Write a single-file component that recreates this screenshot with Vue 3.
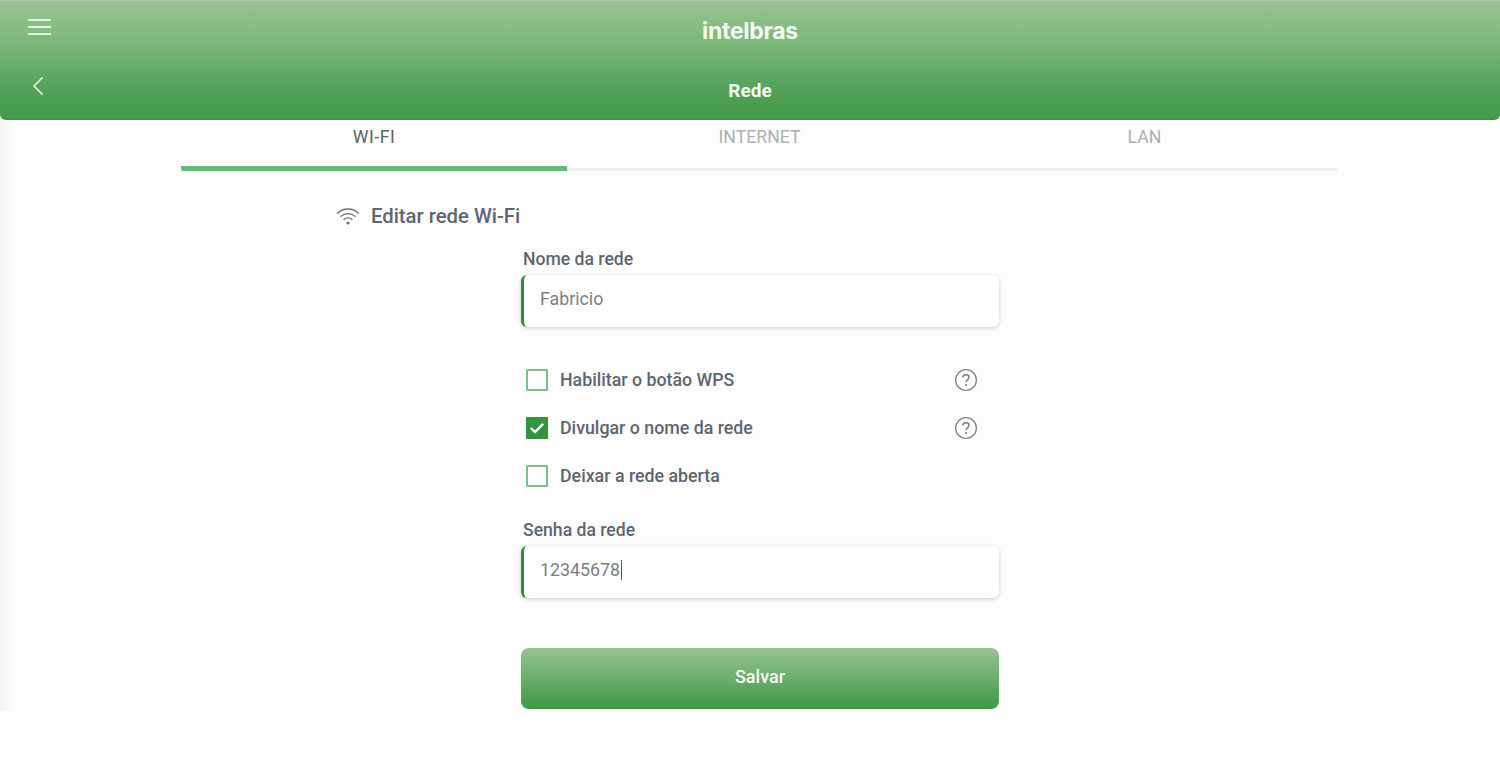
<script setup>
const checks = [
  { label: 'Habilitar o botão WPS', checked: false, help: true },
  { label: 'Divulgar o nome da rede', checked: true, help: true },
  { label: 'Deixar a rede aberta', checked: false, help: false }
]
const tabs = ['WI-FI', 'INTERNET', 'LAN']
</script>

<template>
  <div class="page">
    <div class="side-shade"></div>
    <header class="top">
      <div class="bar1">
        <button class="menu" aria-label="Menu"><span></span><span></span><span></span></button>
        <div class="logo">intelbras</div>
      </div>
      <div class="bar2">
        <svg class="back" width="12" height="20" viewBox="0 0 12 20" fill="none">
          <path d="M10.5 1.5 2 10l8.5 8.5" stroke="#eef6ec" stroke-width="1.6" />
        </svg>
        <div class="title">Rede</div>
      </div>
    </header>

    <nav class="tabs">
      <div v-for="(t, i) in tabs" :key="t" class="tab" :class="{ active: i === 0 }">{{ t }}</div>
    </nav>

    <section class="content">
      <h2 class="heading">
        <svg width="24" height="20" viewBox="0 0 24 20" fill="none" stroke="#6d727a" stroke-width="1.3" stroke-linecap="round">
          <path d="M1.5 7.2C7.3 1.6 16.7 1.6 22.5 7.2" />
          <path d="M4.8 10.4C8.8 6.6 15.2 6.6 19.2 10.4" />
          <path d="M8 13.5C10.2 11.4 13.8 11.4 16 13.5" />
          <circle cx="12" cy="17" r="1.6" fill="#6d727a" stroke="none" />
        </svg>
        Editar rede Wi-Fi
      </h2>

      <form class="form" @submit.prevent>
        <label class="field-label">Nome da rede</label>
        <div class="input">Fabricio</div>

        <div class="checks">
          <div v-for="c in checks" :key="c.label" class="check-row">
            <span class="box" :class="{ on: c.checked }">
              <svg v-if="c.checked" width="16" height="12" viewBox="0 0 16 12" fill="none">
                <path d="M1.8 6 6 10l8.2-8.2" stroke="#fff" stroke-width="2.4" />
              </svg>
            </span>
            <span class="check-label">{{ c.label }}</span>
            <svg v-if="c.help" class="help" width="24" height="24" viewBox="0 0 24 24" fill="none">
              <circle cx="12" cy="12" r="10.4" stroke="#85898e" stroke-width="1.4" />
              <path d="M8.9 9.6c0-1.8 1.3-3 3.1-3s3.1 1.1 3.1 2.7c0 2.4-3 2.4-3 5" stroke="#85898e" stroke-width="1.6" />
              <circle cx="12.1" cy="17" r="1.1" fill="#85898e" />
            </svg>
          </div>
        </div>

        <label class="field-label">Senha da rede</label>
        <div class="input">12345678<i class="caret"></i></div>

        <button class="save" type="button">Salvar</button>
      </form>
    </section>
  </div>
</template>

<style>
html, body { margin: 0; background: #fdfdfd; }
</style>

<style scoped>
.page {
  position: relative;
  width: 1500px;
  height: 763px;
  overflow: hidden;
  background: #fdfdfd;
  font-family: Roboto, "Liberation Sans", sans-serif;
  color: #5f6670;
}
.side-shade {
  position: absolute;
  left: 0;
  top: 120px;
  width: 16px;
  height: 591px;
  background: linear-gradient(90deg, #f4f4f4, #fdfdfd);
}
.top {
  position: relative;
  height: 120px;
  box-sizing: border-box;
  border-top: 1px solid #b5c4ae;
  border-bottom: 1px solid #3c933f;
  border-radius: 0 0 6px 6px;
  background: linear-gradient(180deg, #98c391 0%, #7ab77a 38%, #5fa864 62%, #499c4e 88%, #459a4a 100%);
  color: #fff;
}
.bar1 {
  position: relative;
  height: 57px;
  box-sizing: border-box;
  display: flex;
  justify-content: center;
  border-bottom: 1px solid rgba(255, 255, 255, 0.06);
}
.menu {
  position: absolute;
  left: 28px;
  top: 18px;
  width: 23px;
  padding: 0;
  border: 0;
  background: none;
  display: flex;
  flex-direction: column;
  gap: 5px;
}
.menu span {
  display: block;
  height: 2px;
  background: #e8f2e5;
}
.logo {
  margin-top: 15px;
  font-family: Inter, sans-serif;
  font-size: 23px;
  line-height: 30px;
  font-weight: 700;
  letter-spacing: -0.3px;
  color: #f6faf4;
}
.bar2 {
  position: relative;
  display: flex;
  justify-content: center;
}
.back {
  position: absolute;
  left: 32px;
  top: 18px;
}
.title {
  margin-top: 21px;
  font-family: Roboto, sans-serif;
  font-size: 19px;
  line-height: 24px;
  font-weight: 700;
  color: #f7faf5;
}
.tabs {
  display: flex;
  width: 1156px;
  margin-left: 181px;
  height: 51px;
}
.tab {
  flex: 1;
  box-sizing: border-box;
  text-align: center;
  font-size: 17.7px;
  line-height: 34px;
  color: #aeb0b3;
  border-bottom: 3px solid #f0f0f0;
}
.tab.active {
  flex: 0 0 386px;
  color: #5c6068;
  letter-spacing: 0.5px;
  border-bottom: 5px solid #6aba74;
  border-radius: 2px 0 0 2px;
}
.content {
  position: relative;
  padding-top: 32px;
}
.heading {
  margin: 0 0 0 336px;
  display: flex;
  align-items: center;
  gap: 11px;
  height: 26px;
  font-size: 20.3px;
  font-weight: 500;
  color: #5f6670;
}
.form {
  width: 478px;
  margin: 21px 0 0 521px;
  display: flex;
  flex-direction: column;
}
.field-label {
  margin-left: 2px;
  height: 18px;
  font-size: 17.6px;
  line-height: 18px;
  font-weight: 500;
  color: #5f6670;
  margin-bottom: 7px;
}
.input {
  box-sizing: border-box;
  height: 52px;
  padding: 0 0 5px 16px;
  display: flex;
  align-items: center;
  background: #fff;
  border-left: 3px solid #2f8d3a;
  border-radius: 6px;
  box-shadow: 0 1px 4px rgba(0, 0, 0, 0.2);
  font-size: 17.8px;
  color: #7b7f85;
}
.caret {
  width: 1px;
  height: 20px;
  margin-left: 1px;
  background: #55595f;
}
.checks {
  margin: 29px 0 21px 5px;
  display: flex;
  flex-direction: column;
}
.check-row {
  height: 48px;
  display: flex;
  align-items: center;
}
.box {
  box-sizing: border-box;
  width: 22px;
  height: 22px;
  display: flex;
  align-items: center;
  justify-content: center;
  border: 2px solid #7dc08a;
  background: #fff;
  border-radius: 1px;
}
.box.on {
  background: #35923f;
  border-color: #35923f;
}
.check-label {
  margin-left: 12px;
  padding-bottom: 1px;
  font-size: 17.8px;
  font-weight: 500;
  color: #5f6670;
}
.help {
  margin-left: auto;
  margin-right: 21px;
}
.save {
  margin-top: 50px;
  height: 61px;
  padding: 0 0 3px;
  border: 0;
  border-bottom: 1px solid #3c933f;
  border-radius: 8px;
  background: linear-gradient(180deg, #98c391 0%, #6bae6e 50%, #479b4c 90%);
  color: #f7faf5;
  font-family: Roboto, "Liberation Sans", sans-serif;
  font-size: 18px;
  font-weight: 500;
}
</style>
